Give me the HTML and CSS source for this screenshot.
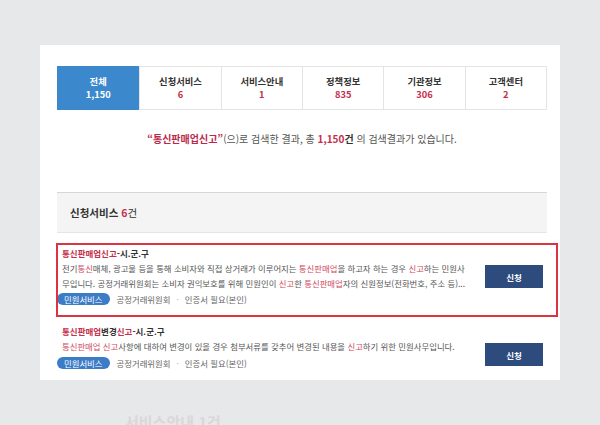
FILE: index.html
```html
<!DOCTYPE html>
<html lang="ko">
<head>
<meta charset="utf-8">
<title>통합검색</title>
<link rel="stylesheet" href="styles.css">
</head>
<body>
<div class="page">
  <div class="card">
    <ul class="tabs">
      <li class="tab active"><span class="tab-label">전체</span><span class="tab-num">1,150</span></li>
      <li class="tab"><span class="tab-label">신청서비스</span><span class="tab-num">6</span></li>
      <li class="tab"><span class="tab-label">서비스안내</span><span class="tab-num">1</span></li>
      <li class="tab"><span class="tab-label">정책정보</span><span class="tab-num">835</span></li>
      <li class="tab"><span class="tab-label">기관정보</span><span class="tab-num">306</span></li>
      <li class="tab"><span class="tab-label">고객센터</span><span class="tab-num">2</span></li>
    </ul>

    <p class="summary"><strong class="kw">“통신판매업신고”</strong>(으)로 검색한 결과, 총 <strong class="count"><span class="red">1,150</span>건</strong> 의 검색결과가 있습니다.</p>

    <div class="section-head"><span class="section-title"><strong>신청서비스</strong> <strong class="red">6</strong>건</span></div>

    <div class="item highlighted">
      <div class="item-body">
        <div class="item-title"><span class="red">통신판매업신고</span>-시.군.구</div>
        <p class="item-desc">전기<em>통신</em>매체, 광고물 등을 통해 소비자와 직접 상거래가 이루어지는 <em>통신판매업</em>을 하고자 하는 경우 <em>신고</em>하는 민원사<br>무입니다. 공정거래위원회는 소비자 권익보호를 위해 민원인이 <em>신고</em>한 <em>통신판매업</em>자의 신원정보(전화번호, 주소 등)...</p>
        <div class="item-meta"><span class="pill">민원서비스</span><span>공정거래위원회</span><span class="sep">·</span><span>인증서 필요(본인)</span></div>
      </div>
      <button class="apply" type="button">신청</button>
    </div>

    <div class="item second">
      <div class="item-body">
        <div class="item-title"><span class="red">통신판매업</span>변경<span class="red">신고</span>-시.군.구</div>
        <p class="item-desc"><em>통신판매업 신고</em>사항에 대하여 변경이 있을 경우 첨부서류를 갖추어 변경된 내용을 <em>신고</em>하기 위한 민원사무입니다.</p>
        <div class="item-meta"><span class="pill">민원서비스</span><span>공정거래위원회</span><span class="sep">·</span><span>인증서 필요(본인)</span></div>
      </div>
      <button class="apply" type="button">신청</button>
    </div>
  </div>
  <div class="faded">서비스안내 1건</div>
</div>
</body>
</html>
```

FILE: styles.css
```css
* { box-sizing: border-box; }

html, body {
  margin: 0;
  padding: 0;
}

body {
  background: #e7e8ea;
  font-family: "Noto Sans CJK KR", "Noto Sans", sans-serif;
  color: #444;
  width: 600px;
  height: 425px;
  overflow: hidden;
}

.page {
  padding: 45px 40px 0 40px;
  height: 425px;
}

.card {
  background: #fff;
  height: 335px;
  padding: 21px 13px 0 17px;
  overflow: hidden;
}

.tabs {
  list-style: none;
  margin: 0;
  padding: 0;
  display: grid;
  grid-template-columns: repeat(6, 1fr);
  height: 44px;
  border: 1px solid #e4e4e4;
}

.tab {
  display: flex;
  flex-direction: column;
  align-items: center;
  justify-content: center;
  border-left: 1px solid #e4e4e4;
  font-size: 9.3px;
  font-weight: 700;
  line-height: 13.5px;
}

.tab:first-child { border-left: 0; }

.tab-label { color: #333; }
.tab-num { color: #c4304c; }

.tab.active {
  background: #3b88cd;
  margin: -1px 0 -1px -1px;
}
.tab.active .tab-label,
.tab.active .tab-num { color: #fff; }

.summary {
  margin: 22px 0 0;
  text-align: center;
  font-size: 10px;
  line-height: 14px;
  color: #555;
}

.summary .kw { color: #b82a4c; }
.summary .count { color: #333; }

.red { color: #c4304c; }

.section-head {
  margin-top: 46px;
  height: 41px;
  background: #f4f4f4;
  border-top: 1px solid #d6d6d6;
  border-bottom: 1px solid #e6e6e6;
  padding-left: 13px;
  display: flex;
  align-items: center;
  font-size: 10.5px;
  color: #333;
}

.section-head strong { font-weight: 700; }

.item {
  display: flex;
  align-items: flex-start;
  padding: 2px 4px 11px 5px;
}

.item.highlighted {
  margin-top: 10px;
  position: relative;
}

.item.highlighted::after {
  content: "";
  position: absolute;
  left: -1px;
  right: -11px;
  top: 0;
  bottom: 0;
  border: 2px solid #dd3341;
  pointer-events: none;
}

.item.second {
  padding-top: 6px;
  padding-bottom: 8px;
}

.item-body {
  flex: 1;
  min-width: 0;
}

.item-title {
  font-size: 8.5px;
  font-weight: 700;
  line-height: 16px;
  color: #333;
}

.item-desc {
  margin: 0;
  font-size: 8.4px;
  line-height: 15px;
  color: #555;
  white-space: nowrap;
}

.item-desc em {
  font-style: normal;
  color: #cf4a62;
}

.item-meta {
  display: flex;
  align-items: center;
  height: 14px;
  margin-top: 1px;
  font-size: 8.4px;
  color: #666;
}

.second .item-meta { margin-top: 2px; }

.pill {
  display: inline-flex;
  align-items: center;
  height: 12px;
  padding: 0 7px;
  margin-left: -5px;
  margin-right: 7px;
  border-radius: 6px;
  background: #3b7cc7;
  color: #fff;
}

.sep {
  margin: 0 6px;
  color: #aaa;
}

.apply {
  margin-top: 20px;
  width: 58px;
  height: 23px;
  border: 0;
  background: #2e4b7d;
  color: #fff;
  font-family: inherit;
  font-size: 8.5px;
  font-weight: 700;
  padding: 0;
}

.faded {
  margin: 33px 0 0 85px;
  font-size: 15px;
  font-weight: 700;
  color: #dcd6d9;
  line-height: 18px;
}
```
